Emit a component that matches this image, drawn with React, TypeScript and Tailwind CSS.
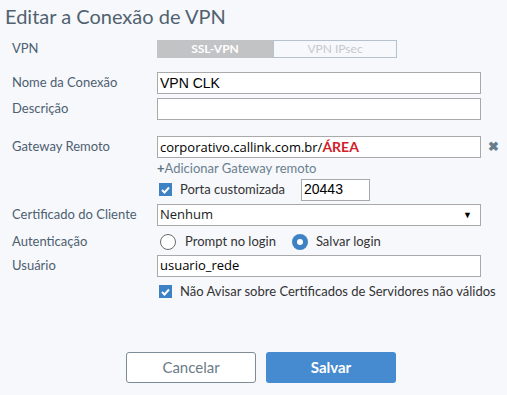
import React from "react";

const Label = ({ text }: { text: string }) => (
  <div className="w-[145px] shrink-0 text-[13px] text-[#4d6070]">{text}</div>
);

const Check = () => (
  <span className="w-[13px] h-[13px] bg-[#3d82c4] flex items-center justify-center shrink-0">
    <svg width="9" height="8" viewBox="0 0 9 8">
      <path d="M1 4 L3.5 6.5 L8 1.5" stroke="white" strokeWidth="1.9" fill="none" />
    </svg>
  </span>
);

const Input = ({ value, className = "" }: { value?: React.ReactNode; className?: string }) => (
  <div
    className={`h-[22px] bg-white border border-[#a9a9a9] px-[2px] flex items-center text-[14px] text-black font-['Liberation_Sans',sans-serif] ${className}`}
  >
    {value}
  </div>
);

export default function App() {
  return (
    <div className="w-[507px] h-[395px] bg-[#f7f8fc] font-['Lato',sans-serif] relative">
      <h1 className="pl-[5px] pt-[4px] text-[20px] leading-[24px] text-[#51626f]">
        Editar a Conexão de VPN
      </h1>

      <div className="pl-[12px] mt-[12px]">
        <div className="flex items-center h-[18px]">
          <Label text="VPN" />
          <div className="flex text-[12px] font-bold">
            <div className="w-[116px] h-[18px] bg-[#c2c3c5] text-white flex items-center justify-center">
              SSL-VPN
            </div>
            <div className="w-[124px] h-[18px] border border-[#b5c2cd] text-[#c5c9ce] font-normal flex items-center justify-center">
              VPN IPsec
            </div>
          </div>
        </div>

        <div className="flex items-center mt-[14px]">
          <Label text="Nome da Conexão" />
          <Input value="VPN CLK" className="w-[324px]" />
        </div>

        <div className="flex items-center mt-[4px]">
          <Label text="Descrição" />
          <Input className="w-[324px] h-[21px]" />
        </div>

        <div className="flex items-center mt-[16px]">
          <Label text="Gateway Remoto" />
          <Input
            className="w-[324px]"
            value={
              <span className="font-['Open_Sans',sans-serif] text-[13px]">
                corporativo.callink.com.br/
                <span className="text-[#d0202a] font-bold font-['Lato',sans-serif] text-[14px]">ÁREA</span>
              </span>
            }
          />
          <span className="ml-[7px] text-[#677d8c] text-[13px] font-bold">✖</span>
        </div>

        <div className="ml-[145px] mt-[2px] text-[13px] text-[#6a7f8d] leading-[16px]">
          <span className="font-bold text-[#5d7180]">+</span>Adicionar Gateway remoto
        </div>

        <div className="flex items-center ml-[147px] mt-[3px] h-[21px]">
          <Check />
          <span className="ml-[8px] text-[13px] text-[#333] w-[121px]">Porta customizada</span>
          <Input value="20443" className="w-[69px] h-[21px]" />
        </div>

        <div className="flex items-center mt-[4px]">
          <Label text="Certificado do Cliente" />
          <div className="w-[324px] h-[22px] bg-white border border-[#a9a9a9] px-[2px] flex items-center justify-between text-[13px] text-[#222] font-['Open_Sans',sans-serif]">
            <span>Nenhum</span>
            <span className="text-[9px] mr-[6px] text-black">▼</span>
          </div>
        </div>

        <div className="flex items-center mt-[6px] h-[20px]">
          <Label text="Autenticação" />
          <div className="flex items-center text-[13px] text-[#333]">
            <span className="ml-[3px] w-[16px] h-[16px] rounded-full border border-[#6b6b6b] bg-white" />
            <span className="ml-[9px]">Prompt no login</span>
            <span className="ml-[16px] w-[16px] h-[16px] rounded-full bg-[#3d82c4] flex items-center justify-center">
              <span className="w-[6px] h-[6px] rounded-full bg-white" />
            </span>
            <span className="ml-[8px]">Salvar login</span>
          </div>
        </div>

        <div className="flex items-center mt-[3px]">
          <Label text="Usuário" />
          <Input
            value={<span className="font-['Open_Sans',sans-serif] text-[13px]">usuario_rede</span>}
            className="w-[324px] h-[21px]"
          />
        </div>

        <div className="flex items-center ml-[147px] mt-[5px]">
          <Check />
          <span className="ml-[8px] text-[13px] text-[#333]">
            Não Avisar sobre Certificados de Servidores não válidos
          </span>
        </div>
      </div>

      <div className="flex gap-[10px] ml-[126px] mt-[50px]">
        <button className="w-[130px] h-[31px] rounded-[3px] border border-[#7d8b96] bg-white text-[15px] text-[#6b7b88]">
          Cancelar
        </button>
        <button className="w-[130px] h-[31px] rounded-[3px] bg-[#468bd0] text-[15px] font-bold text-white">
          Salvar
        </button>
      </div>
    </div>
  );
}
